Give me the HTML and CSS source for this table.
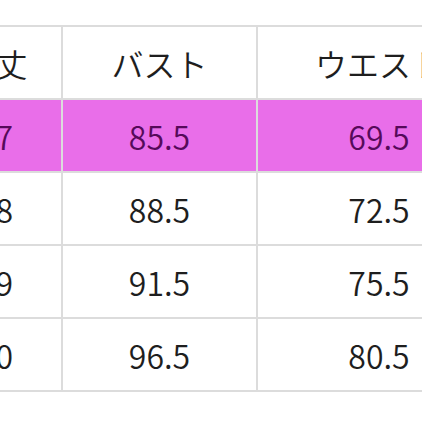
FILE: index.html
```html
<!DOCTYPE html>
<html lang="ja">
<head>
<meta charset="utf-8">
<link rel="stylesheet" href="styles.css">
</head>
<body>
<div class="viewport">
<table class="size-table">
  <colgroup>
    <col class="c1"><col class="c2"><col class="c3">
  </colgroup>
  <thead>
    <tr><th>着丈</th><th>バスト</th><th>ウエスト</th></tr>
  </thead>
  <tbody>
    <tr class="hl"><td>57</td><td>85.5</td><td>69.5</td></tr>
    <tr><td>58</td><td>88.5</td><td>72.5</td></tr>
    <tr><td>59</td><td>91.5</td><td>75.5</td></tr>
    <tr><td>60</td><td>96.5</td><td>80.5</td></tr>
  </tbody>
</table>
</div>
</body>
</html>
```
FILE: styles.css
```css
html, body {
  margin: 0;
  padding: 0;
  background: #ffffff;
}
.viewport {
  width: 422px;
  height: 422px;
  overflow: hidden;
  padding-top: 25px;
  box-sizing: border-box;
}
.size-table {
  margin-left: -72px;
  border-collapse: collapse;
  table-layout: fixed;
  width: 572px;
  font-family: "Noto Sans CJK JP", "Noto Sans", sans-serif;
  color: #1e1e1e;
}
.c1 { width: 133px; }
.c2 { width: 195px; }
.c3 { width: 244px; }
.size-table th,
.size-table td {
  border: 2px solid #dcdcdc;
  height: 71px;
  padding: 0;
  text-align: center;
  vertical-align: middle;
  font-weight: 350;
  line-height: 1;
}
.size-table th {
  font-size: 32px;
}
.size-table td {
  font-size: 32px;
}
.size-table tr.hl td {
  background: #e96ee9;
  color: #560a5a;
}
```
